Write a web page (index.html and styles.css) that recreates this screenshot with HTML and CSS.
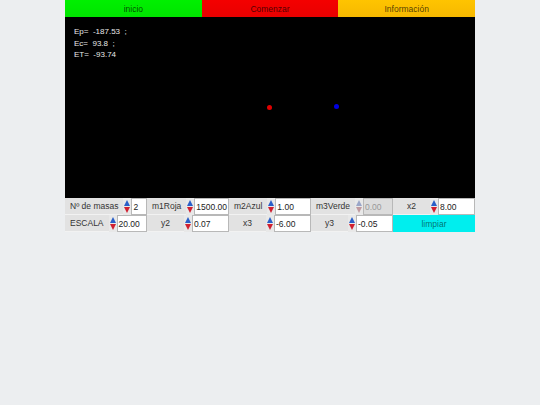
FILE: index.html
```html
<!DOCTYPE html>
<html lang="es">
<head>
<meta charset="utf-8">
<title>Masas</title>
<link rel="stylesheet" href="styles.css">
</head>
<body>
<div class="app">
  <div class="nav">
    <div class="btn btn-green">inicio</div>
    <div class="btn btn-red">Comenzar</div>
    <div class="btn btn-orange">Información</div>
  </div>
  <div class="canvas">
    <div class="readout">
      <div>Ep=&nbsp; -187.53 &nbsp;;</div>
      <div>Ec=&nbsp; 93.8 &nbsp;;</div>
      <div>ET=&nbsp; -93.74</div>
    </div>
    <span class="dot dot-red"></span>
    <span class="dot dot-blue"></span>
  </div>
  <div class="controls">
    <div class="row">
      <div class="cell"><span class="lbl">Nº de masas</span><span class="spin"><i class="up"></i><i class="dn"></i></span><span class="fld">2</span></div>
      <div class="cell"><span class="lbl">m1Roja</span><span class="spin"><i class="up"></i><i class="dn"></i></span><span class="fld">1500.00</span></div>
      <div class="cell"><span class="lbl">m2Azul</span><span class="spin"><i class="up"></i><i class="dn"></i></span><span class="fld">1.00</span></div>
      <div class="cell"><span class="lbl">m3Verde</span><span class="spin off"><i class="up"></i><i class="dn"></i></span><span class="fld off">0.00</span></div>
      <div class="cell"><span class="lbl">x2</span><span class="spin"><i class="up"></i><i class="dn"></i></span><span class="fld">8.00</span></div>
    </div>
    <div class="row">
      <div class="cell"><span class="lbl">ESCALA</span><span class="spin"><i class="up"></i><i class="dn"></i></span><span class="fld">20.00</span></div>
      <div class="cell"><span class="lbl">y2</span><span class="spin"><i class="up"></i><i class="dn"></i></span><span class="fld">0.07</span></div>
      <div class="cell"><span class="lbl">x3</span><span class="spin"><i class="up"></i><i class="dn"></i></span><span class="fld">-6.00</span></div>
      <div class="cell"><span class="lbl">y3</span><span class="spin"><i class="up"></i><i class="dn"></i></span><span class="fld">-0.05</span></div>
      <div class="cell"><span class="clear">limpiar</span></div>
    </div>
  </div>
</div>
</body>
</html>
```
FILE: styles.css
```css
html, body {
  margin: 0;
  padding: 0;
  background: #eceef0;
  font-family: "Liberation Sans", Arial, sans-serif;
}
.app {
  width: 410px;
  margin: 0 auto;
}
.nav {
  display: flex;
  height: 17px;
}
.btn {
  flex: 1;
  display: flex;
  align-items: center;
  justify-content: center;
  font-size: 8.5px;
  color: rgba(0, 0, 0, 0.7);
}
.btn-green { background: linear-gradient(#00f000, #00e400); }
.btn-red { background: linear-gradient(#f40000, #e80000); }
.btn-orange { background: linear-gradient(#ffc400, #f6b800); }
.canvas {
  position: relative;
  height: 181px;
  background: #000;
}
.readout {
  position: absolute;
  left: 9px;
  top: 9px;
  color: #e8e8e8;
  font-size: 8px;
  line-height: 11.5px;
}
.dot {
  position: absolute;
  width: 5px;
  height: 5px;
  border-radius: 50%;
}
.dot-red { background: #e00000; left: 202px; top: 88px; }
.dot-blue { background: #0000e0; left: 269px; top: 87px; }
.row {
  display: flex;
  height: 17px;
}
.cell {
  width: 82px;
  display: flex;
  align-items: stretch;
  background: #e2e2e2;
  font-size: 8.5px;
  color: #333;
}
.lbl {
  min-width: 27px;
  padding: 0 5px;
  display: flex;
  align-items: center;
  justify-content: center;
  white-space: nowrap;
  border-bottom: 1px solid #f2f2f2;
}
.spin {
  width: 8px;
  display: flex;
  flex-direction: column;
  align-items: center;
  justify-content: center;
  gap: 1px;
  background: #e8e8e8;
}
.spin i {
  display: block;
  width: 0;
  height: 0;
  border-left: 3px solid transparent;
  border-right: 3px solid transparent;
}
.spin .up { border-bottom: 6px solid #2a5fc8; }
.spin .dn { border-top: 6px solid #d02030; }
.spin.off .up { border-bottom-color: #9aa6c8; }
.spin.off .dn { border-top-color: #c09aa0; }
.fld {
  flex: 1;
  min-width: 0;
  background: #fff;
  border: 1px solid #b8b8b8;
  padding-left: 1px;
  display: flex;
  align-items: center;
  color: #222;
  overflow: hidden;
}
.fld.off {
  background: #dcdcdc;
  color: #999;
}
.clear {
  flex: 1;
  background: #00eeee;
  color: rgba(0, 0, 0, 0.55);
  display: flex;
  align-items: center;
  justify-content: center;
}
```
